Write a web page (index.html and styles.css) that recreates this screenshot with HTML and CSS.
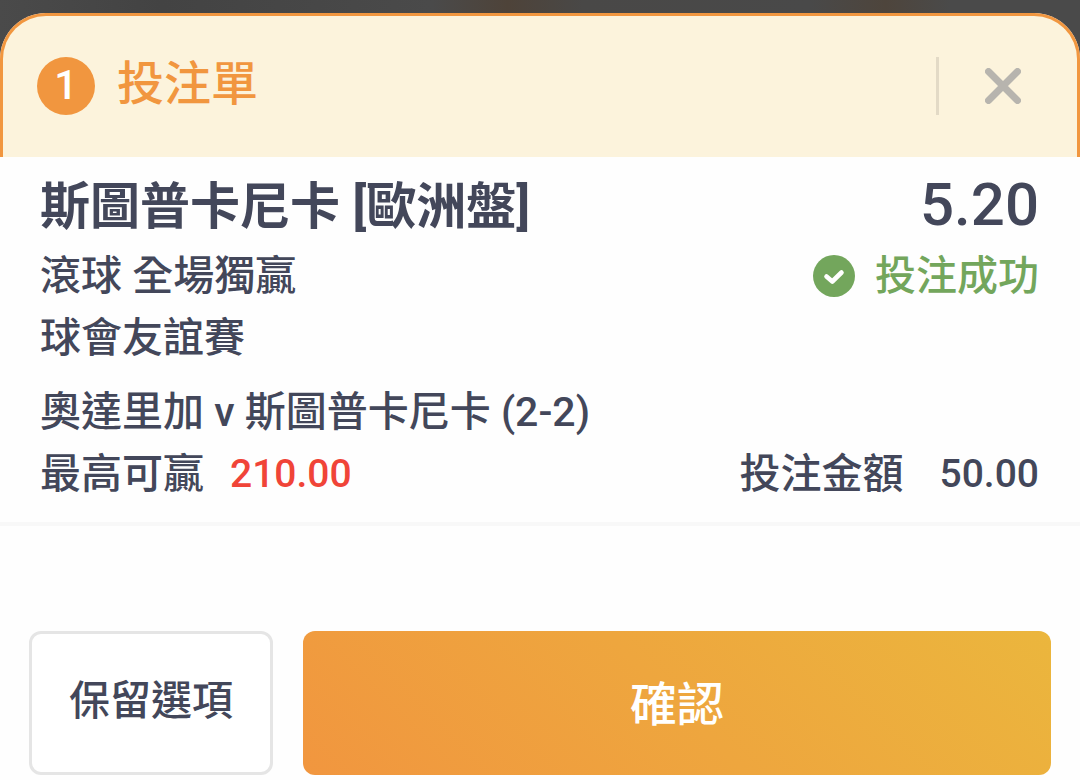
FILE: index.html
```html
<!DOCTYPE html>
<html lang="zh-Hant">
<head>
    <meta charset="UTF-8">
    <meta name="viewport" content="width=device-width, initial-scale=1.0">
    <title>投注單</title>
    <link rel="stylesheet" href="styles.css">
</head>
<body>
    <div class="betslip">
        <header class="slip-header">
            <span class="count">1</span>
            <h1>投注單</h1>
            <button class="close" aria-label="關閉">
                <svg width="36" height="36" viewBox="0 0 36 36">
                    <path d="M3.5 3.5 L32.5 32.5 M32.5 3.5 L3.5 32.5" fill="none" stroke="#b7b4ae" stroke-width="7" stroke-linecap="round"/>
                </svg>
            </button>
        </header>

        <main class="bet">
            <div class="row selection">
                <h2>斯圖普卡尼卡 [歐洲盤]</h2>
                <span class="odds">5.20</span>
            </div>
            <div class="row">
                <span>滾球 全場獨贏</span>
                <span class="status">
                    <svg width="42" height="42" viewBox="0 0 42 42">
                        <circle cx="21" cy="21" r="21" fill="#73a65c"/>
                        <path d="M13.5 21.5 L19.3 26.5 L28.5 17.5" fill="none" stroke="#fff" stroke-width="4.6" stroke-linecap="round" stroke-linejoin="round"/>
                    </svg>
                    投注成功
                </span>
            </div>
            <div class="row">球會友誼賽</div>
            <div class="row match">奧達里加 v 斯圖普卡尼卡 (2-2)</div>
            <div class="row">
                <span class="amount">最高可贏 <b class="win">210.00</b></span>
                <span class="amount stake">投注金額 <b>50.00</b></span>
            </div>
        </main>

        <footer class="actions">
            <button class="btn keep">保留選項</button>
            <button class="btn confirm">確認</button>
        </footer>
    </div>
</body>
</html>
```

FILE: styles.css
```css
* {
    box-sizing: border-box;
}
body {
    margin: 0;
    padding-top: 13px;
    min-height: 100vh;
    display: flex;
    flex-direction: column;
    background: linear-gradient(90deg, #4a4a4a 0%, #434343 15%, #4a4a4a 40%, #4e4339 47%, #494847 54%, #494949 75%, #4e453c 82%, #4a4a4a 88%);
    font-family: Roboto, "Noto Sans CJK TC", sans-serif;
    font-size: 41px;
    font-weight: 500;
    color: #43475a;
}
h1, h2 {
    margin: 0;
}
svg {
    display: block;
}
button {
    font-family: inherit;
    cursor: pointer;
}
.betslip {
    flex: 1;
    background: #fefefe;
    border-radius: 46px 46px 0 0;
}
.slip-header {
    display: flex;
    align-items: center;
    height: 144px;
    padding: 0 0 2px 34px;
    background: #fcf3dc;
    border: 3px solid #f1963f;
    border-bottom: none;
    border-radius: 46px 46px 0 0;
}
.count {
    width: 58px;
    height: 58px;
    border-radius: 50%;
    background: #f1963f;
    color: #fff;
    font-size: 41px;
    line-height: 56px;
    text-align: center;
}
h1 {
    margin-left: 22px;
    padding-bottom: 12px;
    font-size: 47px;
    font-weight: 500;
    color: #f1963f;
}
.close {
    margin-left: auto;
    padding: 11px 56px 11px 46px;
    background: none;
    border: none;
    border-left: 3px solid #e3dac6;
}
.bet {
    padding: 12px 41px 17px 40px;
    border-bottom: 4px solid #f8f8f8;
}
.row {
    display: flex;
    justify-content: space-between;
    align-items: center;
    line-height: 62px;
}
.selection {
    line-height: 72px;
    margin-bottom: 4px;
}
h2 {
    padding-top: 4px;
    line-height: 68px;
    font-size: 50px;
    font-weight: 700;
}
.odds {
    font-size: 60px;
}
.status {
    display: flex;
    align-items: center;
    gap: 20px;
    color: #73a65c;
}
.match {
    margin-top: 12px;
}
.amount {
    display: flex;
    gap: 26px;
}
.amount b {
    font-size: 39px;
    font-weight: 500;
}
.stake {
    gap: 36px;
}
.amount .win {
    color: #f04438;
}
.actions {
    display: flex;
    gap: 30px;
    padding: 105px 29px 6px;
}
.btn {
    height: 144px;
    padding: 0 37px 6px;
    border-radius: 12px;
    font-weight: 500;
}
.keep {
    padding-bottom: 12px;
    background: #fff;
    border: 3px solid #e5e5e5;
    font-size: 41px;
    color: #43475a;
}
.confirm {
    flex: 1;
    background: linear-gradient(45deg, #f1963f, #ebb63d);
    border: none;
    font-size: 47px;
    color: #fff;
}
```
